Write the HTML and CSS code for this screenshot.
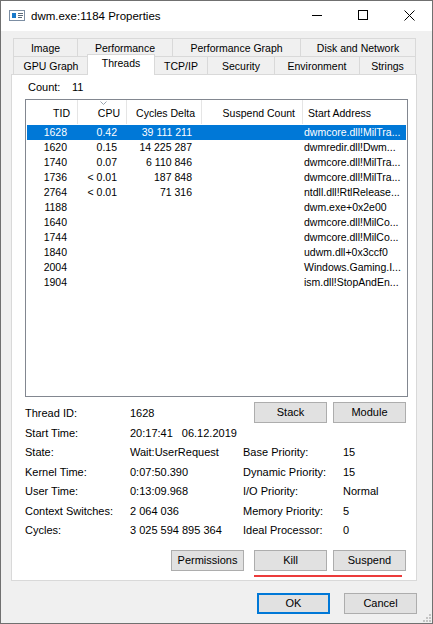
FILE: index.html
```html
<!DOCTYPE html>
<html lang="en">
<head>
<meta charset="utf-8">
<title>dwm.exe:1184 Properties</title>
<link rel="stylesheet" href="styles.css">
</head>
<body>
<div class="window">
  <div class="titlebar">
    <svg class="app-icon" width="16" height="11" viewBox="0 0 16 11">
      <rect x="0.5" y="0.5" width="15" height="10" fill="#fff" stroke="#7c8ea3"/>
      <rect x="3" y="3" width="4" height="5" fill="#1979ca"/>
      <rect x="9" y="3" width="5" height="1" fill="#5c6b7a"/>
      <rect x="9" y="5" width="5" height="1" fill="#5c6b7a"/>
      <rect x="9" y="7" width="4" height="1" fill="#5c6b7a"/>
    </svg>
    <span class="title">dwm.exe:1184 Properties</span>
    <div class="caption">
      <div class="cap-btn"><div class="min-line"></div></div>
      <div class="cap-btn"><svg width="10" height="10" viewBox="0 0 10 10"><rect x="0.5" y="0.5" width="9" height="9" fill="none" stroke="#000"/></svg></div>
      <div class="cap-btn"><svg width="11" height="11" viewBox="0 0 11 11"><path d="M0.5 0.5L10.5 10.5M10.5 0.5L0.5 10.5" stroke="#000" stroke-width="1"/></svg></div>
    </div>
  </div>

  <div class="tabs">
    <div class="tab-row back">
      <div class="tab w-image">Image</div>
      <div class="tab w-perf">Performance</div>
      <div class="tab w-perfgraph">Performance Graph</div>
      <div class="tab w-disk last">Disk and Network</div>
    </div>
    <div class="tab-row front">
      <div class="tab w-gpu">GPU Graph</div>
      <div class="tab selected">Threads</div>
      <div class="tab w-tcp">TCP/IP</div>
      <div class="tab w-sec">Security</div>
      <div class="tab w-env">Environment</div>
      <div class="tab w-str last">Strings</div>
    </div>
  </div>

  <div class="panel">
    <div class="count"><span class="count-label">Count:</span><span>11</span></div>

    <div class="list">
      <div class="lv-head">
        <div class="hc c-tid">TID</div>
        <div class="hc c-cpu">
          <svg class="sort" width="7" height="4" viewBox="0 0 7 4"><polyline points="0.5,0.5 3.5,3.5 6.5,0.5" fill="none" stroke="#9aa3ad" stroke-width="1"/></svg>
          CPU
        </div>
        <div class="hc c-cyc">Cycles Delta</div>
        <div class="hc c-sus">Suspend Count</div>
        <div class="hc c-addr">Start Address</div>
      </div>
      <div class="lv-body">
        <div class="row sel"><span class="c c-tid">1628</span><span class="c c-cpu">0.42</span><span class="c c-cyc">39 111 211</span><span class="c c-sus"></span><span class="c c-addr">dwmcore.dll!MilTra...</span></div>
        <div class="row"><span class="c c-tid">1620</span><span class="c c-cpu">0.15</span><span class="c c-cyc">14 225 287</span><span class="c c-sus"></span><span class="c c-addr">dwmredir.dll!Dwm...</span></div>
        <div class="row"><span class="c c-tid">1740</span><span class="c c-cpu">0.07</span><span class="c c-cyc">6 110 846</span><span class="c c-sus"></span><span class="c c-addr">dwmcore.dll!MilTra...</span></div>
        <div class="row"><span class="c c-tid">1736</span><span class="c c-cpu">&lt; 0.01</span><span class="c c-cyc">187 848</span><span class="c c-sus"></span><span class="c c-addr">dwmcore.dll!MilTra...</span></div>
        <div class="row"><span class="c c-tid">2764</span><span class="c c-cpu">&lt; 0.01</span><span class="c c-cyc">71 316</span><span class="c c-sus"></span><span class="c c-addr">ntdll.dll!RtlRelease...</span></div>
        <div class="row"><span class="c c-tid">1188</span><span class="c c-cpu"></span><span class="c c-cyc"></span><span class="c c-sus"></span><span class="c c-addr">dwm.exe+0x2e00</span></div>
        <div class="row"><span class="c c-tid">1640</span><span class="c c-cpu"></span><span class="c c-cyc"></span><span class="c c-sus"></span><span class="c c-addr">dwmcore.dll!MilCo...</span></div>
        <div class="row"><span class="c c-tid">1744</span><span class="c c-cpu"></span><span class="c c-cyc"></span><span class="c c-sus"></span><span class="c c-addr">dwmcore.dll!MilCo...</span></div>
        <div class="row"><span class="c c-tid">1840</span><span class="c c-cpu"></span><span class="c c-cyc"></span><span class="c c-sus"></span><span class="c c-addr">udwm.dll+0x3ccf0</span></div>
        <div class="row"><span class="c c-tid">2004</span><span class="c c-cpu"></span><span class="c c-cyc"></span><span class="c c-sus"></span><span class="c c-addr">Windows.Gaming.I...</span></div>
        <div class="row"><span class="c c-tid">1904</span><span class="c c-cpu"></span><span class="c c-cyc"></span><span class="c c-sus"></span><span class="c c-addr">ism.dll!StopAndEn...</span></div>
      </div>
    </div>

    <div class="details">
      <div class="d">Thread ID:</div>
      <div class="d">1628</div>
      <div class="d-btns"><button class="btn">Stack</button><button class="btn">Module</button></div>

      <div class="d">Start Time:</div>
      <div class="d span3">20:17:41<span class="date">06.12.2019</span></div>

      <div class="d">State:</div>
      <div class="d">Wait:UserRequest</div>
      <div class="d">Base Priority:</div>
      <div class="d">15</div>

      <div class="d">Kernel Time:</div>
      <div class="d">0:07:50.390</div>
      <div class="d">Dynamic Priority:</div>
      <div class="d">15</div>

      <div class="d">User Time:</div>
      <div class="d">0:13:09.968</div>
      <div class="d">I/O Priority:</div>
      <div class="d">Normal</div>

      <div class="d">Context Switches:</div>
      <div class="d">2 064 036</div>
      <div class="d">Memory Priority:</div>
      <div class="d">5</div>

      <div class="d">Cycles:</div>
      <div class="d">3 025 594 895 364</div>
      <div class="d">Ideal Processor:</div>
      <div class="d">0</div>
    </div>

    <div class="actions">
      <button class="btn perm">Permissions</button>
      <div class="marked">
        <button class="btn">Kill</button>
        <button class="btn">Suspend</button>
      </div>
    </div>
  </div>

  <div class="footer">
    <button class="btn default">OK</button>
    <button class="btn">Cancel</button>
  </div>

  <svg class="grip" width="8" height="8" viewBox="0 0 8 8">
    <rect x="6" y="0" width="2" height="2" fill="#c4c4c4"/>
    <rect x="3" y="3" width="2" height="2" fill="#c4c4c4"/>
    <rect x="6" y="3" width="2" height="2" fill="#c4c4c4"/>
    <rect x="0" y="6" width="2" height="2" fill="#c4c4c4"/>
    <rect x="3" y="6" width="2" height="2" fill="#c4c4c4"/>
    <rect x="6" y="6" width="2" height="2" fill="#c4c4c4"/>
  </svg>
</div>
</body>
</html>
```
FILE: styles.css
```css
* { box-sizing: border-box; }
html, body { margin: 0; padding: 0; }
body {
  width: 433px;
  height: 624px;
  overflow: hidden;
  background: #f0f0f0;
  font-family: "Liberation Sans", Arial, sans-serif;
  font-size: 11px;
  color: #000;
}

.window {
  position: relative;
  width: 433px;
  height: 624px;
  border: 1px solid #707070;
  background: #f0f0f0;
  display: flex;
  flex-direction: column;
}

/* title bar */
.titlebar {
  flex: none;
  height: 30px;
  background: #fff;
  display: flex;
  align-items: center;
}
.app-icon { margin-left: 8px; margin-top: -1px; flex: none; }
.title { margin-left: 6px; font-size: 11.5px; margin-top: -1px; white-space: nowrap; }
.caption { margin-left: auto; display: flex; height: 30px; }
.cap-btn {
  width: 46px;
  height: 30px;
  display: flex;
  align-items: center;
  justify-content: center;
  padding-bottom: 2px;
}
.min-line { width: 10px; height: 1px; background: #000; }

/* tabs */
.tabs {
  flex: none;
  margin: 7px 0 0 12px;
  height: 36px;
  font-size: 10.5px;
}
.tab-row { display: flex; height: 18px; align-items: flex-start; }
.tab {
  height: 18px;
  border-top: 1px solid #d9d9d9;
  border-left: 1px solid #d9d9d9;
  background: #f0f0f0;
  display: flex;
  align-items: center;
  justify-content: center;
  white-space: nowrap;
  padding-top: 1px;
}
.tab.last { border-right: 1px solid #d9d9d9; }
.w-image { width: 64px; }
.w-perf { width: 95px; }
.w-perfgraph { width: 128px; }
.w-disk { width: 116px; }
.w-gpu { width: 75px; }
.w-tcp { width: 53px; }
.w-sec { width: 67px; }
.w-env { width: 85px; }
.w-str { width: 57px; }
.tab.selected {
  position: relative;
  z-index: 2;
  width: 68px;
  height: 21px;
  margin: -2px -1px 0 -1px;
  background: #fff;
  border-right: 1px solid #d9d9d9;
  padding: 0 0 4px;
}

/* panel */
.panel {
  flex: none;
  margin-left: 10px;
  width: 406px;
  height: 507px;
  background: #fff;
  border: 1px solid #d9d9d9;
}
.count {
  margin: 5px 0 0 16px;
  height: 14px;
  line-height: 14px;
  display: flex;
}
.count-label { width: 44px; }

/* list view */
.list {
  margin: 5px 0 0 13px;
  width: 383px;
  height: 298px;
  border: 1px solid #828790;
  background: #fff;
  overflow: hidden;
  font-size: 10.5px;
}
.lv-head { display: flex; height: 24px; }
.hc {
  position: relative;
  height: 24px;
  display: flex;
  align-items: center;
  border-right: 1px solid #e5e5e5;
  white-space: nowrap;
  padding-top: 1px;
}
.hc.c-tid { width: 52px; justify-content: flex-end; padding-right: 7px; }
.hc.c-cpu { width: 49px; justify-content: flex-end; padding-right: 6px; }
.hc.c-cyc { width: 75px; justify-content: flex-end; padding-right: 6px; }
.hc.c-sus { width: 101px; justify-content: flex-end; padding-right: 7px; }
.hc.c-addr { flex: 1; padding-left: 5px; border-right: none; }
.sort { position: absolute; top: 1px; left: 22px; }

.lv-body { margin-top: 1px; }
.row {
  display: flex;
  height: 15px;
  line-height: 15px;
  margin: 0 1px;
  white-space: nowrap;
}
.row.sel { background: #0078d7; color: #fff; }
.c { display: block; overflow: hidden; }
.c.c-tid { width: 51px; text-align: right; padding-right: 11px; }
.c.c-cpu { width: 49px; text-align: right; padding-right: 10px; }
.c.c-cyc { width: 75px; text-align: right; padding-right: 10px; }
.c.c-sus { width: 101px; }
.c.c-addr { flex: 1; padding-left: 1px; }

/* details grid */
.details {
  margin: 5px 0 0 13px;
  width: 381px;
  display: grid;
  grid-template-columns: 105px 113px 100px 1fr;
  grid-template-rows: 21px repeat(6, 19.5px);
}
.d {
  display: flex;
  align-items: center;
  white-space: nowrap;
}
.span3 { grid-column: 2 / 5; }
.date { margin-left: 9px; }
.d-btns {
  grid-column: 3 / 5;
  display: flex;
  justify-content: flex-end;
  gap: 6px;
}

.btn {
  width: 73px;
  height: 21px;
  margin: 0;
  padding: 0 0 1px;
  border: 1px solid #adadad;
  background: #e1e1e1;
  font-family: "Liberation Sans", Arial, sans-serif;
  font-size: 11px;
  color: #000;
}
.btn.default { border: 2px solid #0078d7; }

.actions {
  margin: 10px 0 0 13px;
  width: 381px;
  display: flex;
  justify-content: flex-end;
  gap: 10px;
}
.marked {
  position: relative;
  display: flex;
  gap: 6px;
}
.marked::after {
  content: "";
  position: absolute;
  left: 0;
  right: 4px;
  top: 25px;
  height: 2px;
  background: #ec3b3b;
}

/* footer */
.footer {
  flex: none;
  margin: 12px 15px 0 0;
  display: flex;
  justify-content: flex-end;
  gap: 14px;
}

.grip { position: absolute; right: 1px; bottom: 1px; }
```
